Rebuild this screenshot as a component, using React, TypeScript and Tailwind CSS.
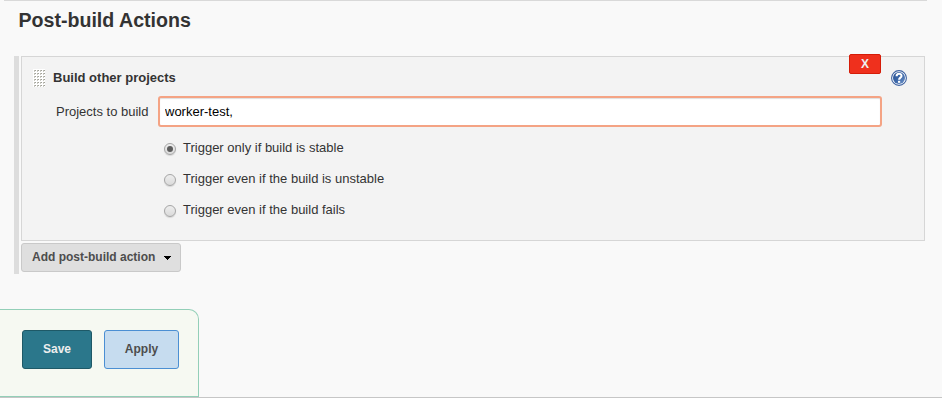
const options = [
  { label: "Trigger only if build is stable", checked: true },
  { label: "Trigger even if the build is unstable", checked: false },
  { label: "Trigger even if the build fails", checked: false },
];

function DragHandle() {
  return (
    <svg className="block h-[18px] w-3" viewBox="0 0 12 18" shapeRendering="crispEdges">
      <rect width="12" height="18" fill="#fff" />
      {[0, 1, 2, 3, 4, 5].map((row) =>
        [0, 1, 2, 3].map((col) => (
          <g key={`${row}-${col}`}>
            <rect x={col * 3 + 1} y={row * 3 + 1} width="2" height="1" fill="#bdbdb5" />
            <rect x={col * 3 + 2} y={row * 3 + 1} width="1" height="1" fill="#a0a098" />
            <rect x={col * 3 + 1} y={row * 3 + 2} width="1" height="1" fill="#c9c9c2" />
          </g>
        )),
      )}
    </svg>
  );
}

function HelpIcon() {
  return (
    <svg className="block h-4 w-4" viewBox="0 0 16 16">
      <defs>
        <linearGradient id="help" x1="0" y1="0" x2="1" y2="1">
          <stop offset="0" stopColor="#264f92" />
          <stop offset="0.55" stopColor="#3f6aab" />
          <stop offset="1" stopColor="#7295c8" />
        </linearGradient>
      </defs>
      <circle cx="8" cy="8" r="7.4" fill="#fff" stroke="#3c60a0" strokeWidth="1.1" />
      <circle cx="8" cy="8" r="6" fill="url(#help)" />
      <path d="M5.6 6.2C5.6 3 10.5 3 10.5 5.9C10.5 7.7 8.1 7.7 8.1 9.8" fill="none" stroke="#fff" strokeWidth="2.1" />
      <rect x="7" y="10.8" width="2.2" height="2" fill="#fff" />
    </svg>
  );
}

function Radio({ checked }: { checked: boolean }) {
  return (
    <span className="mt-[3px] flex h-3 w-3 items-center justify-center rounded-full border border-[#a5a5a5] bg-linear-to-b from-[#eeeeee] to-[#dadada] shadow-[0_1px_1px_rgba(0,0,0,0.12)]">
      {checked && <span className="h-1.5 w-1.5 rounded-full bg-[#5c5c5c]" />}
    </span>
  );
}

export default function App() {
  return (
    <div className="h-[403px] w-[942px] overflow-hidden bg-white font-['Liberation_Sans',Arial,sans-serif] text-[13px] text-[#333333]">
      <main className="flex h-[398px] flex-col border-b border-[#c6c6c6] bg-[#f9f9f9]">
        <div className="ml-1 h-px w-[923px] shrink-0 bg-[#d9d9d9]" />
        <h2 className="mt-[7px] ml-[18.5px] h-6 text-[19.6px] leading-6 font-bold">Post-build Actions</h2>
        <section className="mt-6 ml-[14px] h-[218px] w-[911px] border-l-[5px] border-[#dddddd] pl-0.5">
          <div className="relative h-[185px] border border-[#d6d6d6] bg-[#f3f3f3]">
            <div className="flex h-[39px] pl-[11px]">
              <div className="pt-[12px]">
                <DragHandle />
              </div>
              <h3 className="mt-[13px] ml-2 leading-4 font-bold">Build other projects</h3>
            </div>
            <div className="flex h-[31px]">
              <label className="w-[126.5px] pt-[8px] text-right leading-4 whitespace-nowrap">Projects to build</label>
              <input
                className="ml-[9.5px] h-[31px] w-[724px] rounded-[3px] border-2 border-[#f4a384] bg-white px-[5px] pb-px text-black shadow-[inset_0_1px_1px_#dedede] outline-none"
                defaultValue="worker-test,"
              />
            </div>
            <div className="mt-[13px] ml-[142px] flex flex-col gap-[15px]">
              {options.map((option) => (
                <label key={option.label} className="flex h-4 gap-[7px] leading-4">
                  <Radio checked={option.checked} />
                  {option.label}
                </label>
              ))}
            </div>
            <button className="absolute -top-[3px] left-[827px] h-5 w-8 rounded-[2px] border border-[#d51c08] bg-[#ef301d] text-xs leading-[18px] font-bold text-[#eeeeee]">
              X
            </button>
            <div className="absolute top-[13px] left-[869px]">
              <HelpIcon />
            </div>
          </div>
          <button className="mt-0.5 flex h-[29px] w-40 items-center rounded-[3px] border border-[#c9c9c9] bg-[#dfdfdf] pb-px pl-[10px] text-xs font-bold text-[#4d4d4d]">
            Add post-build action
            <svg className="mt-[2px] ml-[8.6px] block h-1 w-[7px]" viewBox="0 0 7 4" shapeRendering="crispEdges">
              <path d="M0 0h7v1H6v1H5v1H4v1H3V3H2V2H1V1H0z" fill="#000" />
            </svg>
          </button>
        </section>
        <footer className="mt-[35px] flex h-[88px] w-[199px] gap-3 rounded-tr-[10px] border-t border-r border-b border-[#93cfb8] bg-[#f6f9f2] pt-5 pl-[22px]">
          <button className="h-[39px] w-[70px] rounded-[3px] border border-[#1e5967] bg-[#2b778b] pb-px text-xs font-bold text-[#eeeeee]">Save</button>
          <button className="h-[39px] w-[75px] rounded-[3px] border border-[#4b8fd3] bg-[#c6dcef] pb-px text-xs font-bold text-[#4d4d4d]">Apply</button>
        </footer>
      </main>
    </div>
  );
}
